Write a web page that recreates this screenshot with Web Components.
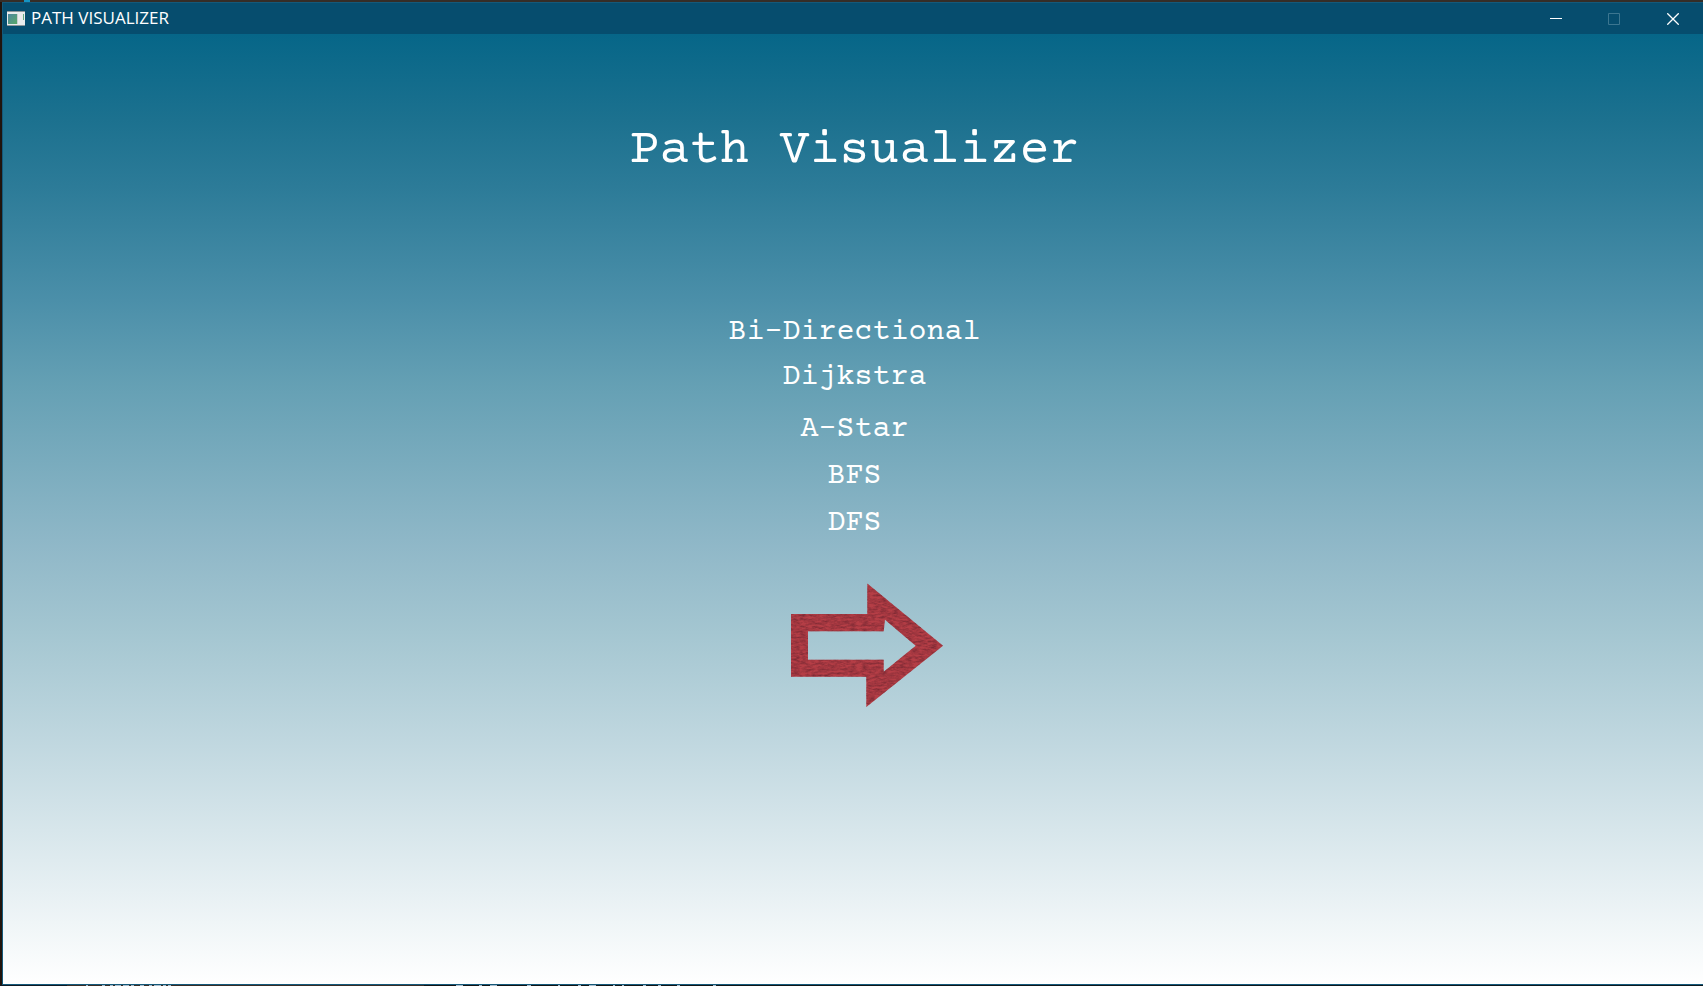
<!DOCTYPE html>
<html lang="en">
<head>
<meta charset="utf-8">
<title>PATH VISUALIZER</title>
<style>
html, body { margin: 0; height: 100%; }
body { background: #16191b; overflow: hidden; }
</style>
</head>
<body>
<app-window>
  <title-bar slot="bar">PATH VISUALIZER</title-bar>
  <start-menu>
    <span slot="heading">Path Visualizer</span>
    <menu-choice>Bi-Directional</menu-choice>
    <menu-choice class="near">Dijkstra</menu-choice>
    <menu-choice class="wide">A-Star</menu-choice>
    <menu-choice>BFS</menu-choice>
    <menu-choice>DFS</menu-choice>
    <arrow-button slot="next"></arrow-button>
  </start-menu>
</app-window>
<script>
class Base extends HTMLElement {
  constructor() {
    super();
    this.attachShadow({ mode: 'open' }).innerHTML = this.constructor.markup;
  }
}

customElements.define('app-window', class extends Base {
  static markup = `
    <style>
      :host { display: flex; flex-direction: column; box-sizing: border-box; height: 100vh; }
      .desk { height: 2px; flex: none; background: linear-gradient(90deg, transparent 24px, #1595c4 24px 30px, transparent 30px), #352d27; }
      .row { flex: 1; display: flex; border-left: 2px solid #20140d; min-height: 0; }
      .frame { flex: 1; display: flex; flex-direction: column; border: 1px solid #14597a; border-right: 0; }
      .below { display: block; width: 100%; height: 1px; flex: none; background: linear-gradient(90deg, #101a24 67px, #3a2d26 67px 424px, #141414 424px, #0d1a20); }
    </style>
    <div class="desk"></div>
    <div class="row"><div class="frame"><slot name="bar"></slot><slot></slot></div></div>
    <svg class="below" aria-hidden="true"><path fill="#a9bccb" d="M86 0h2v1h-2zM102 0h3v1h-3zM110 0h3v1h-3zM115 0h6v1h-6zM123 0h6v1h-6zM131 0h3v1h-3zM140 0h4v1h-4zM149 0h3v1h-3zM154 0h7v1h-7zM163 0h3v1h-3zM168 0h3v1h-3zM456 0h7v1h-7zM479 0h3v1h-3zM490 0h7v1h-7zM527 0h4v1h-4zM558 0h2v1h-2zM578 0h3v1h-3zM589 0h7v1h-7zM613 0h2v1h-2zM622 0h2v1h-2zM643 0h3v1h-3zM658 0h3v1h-3zM677 0h3v1h-3zM713 0h3v1h-3z"/></svg>`;
});

customElements.define('title-bar', class extends Base {
  static markup = `
    <style>
      :host { display: flex; align-items: center; height: 31px; flex: none; background: #064d6e; color: #fff; font: 17px/30px "Open Sans", "Noto Sans", sans-serif; }
      .icon { margin: 0 6px 0 4px; flex: none; }
      .name { flex: 1; height: 31px; }
      button { width: 58px; height: 31px; padding: 0; border: 0; background: none; color: inherit; display: grid; place-items: center; }
      button:last-child { width: 60px; }
      button:disabled { color: #3c7690; }
      svg { display: block; }
    </style>
    <svg class="icon" width="18" height="15" viewBox="0 0 18 15" aria-hidden="true">
      <defs><linearGradient id="g" x2="1" y2="1"><stop stop-color="#4c86a0"/><stop offset="1" stop-color="#58a867"/></linearGradient></defs>
      <path fill="#e9ebec" d="M0 0h18v15H0z"/><path fill="#8c9599" d="M0 0h18v1H0zM0 14h18v1H0z"/>
      <path fill="url(#g)" d="M1 3h9v10H1z"/><path fill="#c9cfd0" d="M10 3h1v10h-1z"/>
      <path fill="#63ab82" d="M16 3h1v6h-1z"/>
    </svg>
    <span class="name"><slot></slot></span>
    <button aria-label="Minimize"><svg width="12" height="12"><path fill="currentColor" d="M0 5h12v1H0z"/></svg></button>
    <button aria-label="Maximize" disabled><svg width="12" height="12"><path fill="none" stroke="currentColor" d="M.5 .5h11v11H.5z"/></svg></button>
    <button aria-label="Close"><svg width="12" height="12"><path stroke="currentColor" stroke-width="1.3" d="M.3 .3 11.7 11.7M11.7 .3 .3 11.7"/></svg></button>`;
});

customElements.define('start-menu', class extends Base {
  static markup = `
    <style>
      :host {
        flex: 1; display: flex; flex-direction: column; align-items: center;
        padding-left: 3px; color: #fff;
        font-family: "Courier Prime", "Courier 10 Pitch", "Liberation Mono", monospace;
        background: linear-gradient(#066688, #1c718f 9%, #2c7b98 16%, #4b8fa9 28%, #65a0b4 37%, #90b8c8 54%, #a4c6d1 63%, #c1d8e0 75%, #dfebef 87%, #fff);
      }
      h1 { margin: 87px 0 0; font-size: 50px; line-height: 60px; font-weight: 400; }
      nav { display: flex; flex-direction: column; align-items: center; margin-top: 128px; }
    </style>
    <h1><slot name="heading"></slot></h1>
    <nav><slot></slot></nav>
    <slot name="next"></slot>`;
});

customElements.define('menu-choice', class extends Base {
  static markup = `
    <style>
      :host { display: block; }
      :host(.near) { margin: -2px 0 0; }
      :host(.wide) { margin: 5px 0 0; }
      button { display: block; height: 47px; padding: 0 8px; border: 0; background: none; color: inherit; font: inherit; font-size: 30px; line-height: 47px; }
    </style>
    <button><slot></slot></button>`;
});

customElements.define('arrow-button', class extends Base {
  static markup = `
    <style>
      :host { display: block; margin-top: 24px; }
      button { display: block; padding: 0; border: 0; background: none; }
      svg { display: block; }
    </style>
    <button aria-label="Start">
      <svg width="180" height="150" viewBox="765 570 180 150">
        <filter id="t" x="0" y="0" width="1" height="1" color-interpolation-filters="sRGB">
          <feTurbulence type="fractalNoise" baseFrequency=".16 .5" numOctaves="3" seed="4"/>
          <feColorMatrix values="0 0 0 0 .48  0 0 0 0 .16  0 0 0 0 .2  1.8 0 0 0 -.6"/>
          <feComposite in2="SourceGraphic" operator="in" result="n"/>
          <feMerge><feMergeNode in="SourceGraphic"/><feMergeNode in="n"/></feMerge>
        </filter>
        <path filter="url(#t)" fill="#b53e46" fill-rule="evenodd" d="M791 613H867.300V582.500L943 644.700L866.300 706V675.700H791ZM808 630.300V658.700H883.700V670.700L915.700 644.700L885 618.700L883.700 630.300Z"/>
      </svg>
    </button>`;
});
</script>
</body>
</html>
